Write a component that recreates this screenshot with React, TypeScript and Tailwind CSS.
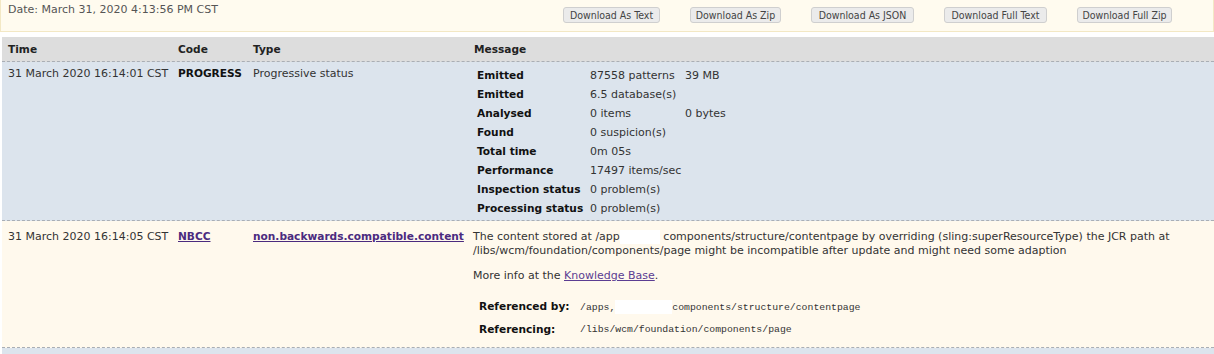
const font = "font-['DejaVu_Sans','Noto_Sans',sans-serif]";

const downloads = [
  { label: "Download As Text", w: "w-[97px]" },
  { label: "Download As Zip", w: "w-[91px]" },
  { label: "Download As JSON", w: "w-[103px]" },
  { label: "Download Full Text", w: "w-[103px]" },
  { label: "Download Full Zip", w: "w-[95px]" },
];

const stats = [
  ["Emitted", "87558 patterns", "39 MB"],
  ["Emitted", "6.5 database(s)", ""],
  ["Analysed", "0 items", "0 bytes"],
  ["Found", "0 suspicion(s)", ""],
  ["Total time", "0m 05s", ""],
  ["Performance", "17497 items/sec", ""],
  ["Inspection status", "0 problem(s)", ""],
  ["Processing status", "0 problem(s)", ""],
];

function Redacted({ w }: { w: string }) {
  return <span className={`inline-block h-[14px] align-middle bg-white ${w}`} />;
}

export default function App() {
  return (
    <div className={`${font} text-[11px] leading-[13px] text-[#333] bg-white w-[1214px] h-[354px] overflow-hidden`}>
      <div className="h-[32px] bg-[#fffbef] border border-t-0 border-[#f3e8c4] flex">
        <div className="pl-[7px] pt-[3px] w-[562px] text-[#555]">Date: March 31, 2020 4:13:56 PM CST</div>
        <div className="flex gap-[30px] pt-[7px]">
          {downloads.map((d) => (
            <button
              key={d.label}
              className={`${d.w} h-[16px] text-center text-[10.5px] leading-[14px] whitespace-nowrap font-['DejaVu_Sans_Condensed',sans-serif] text-[#444] bg-[#ebebeb] border border-[#cfcfcf] rounded-[3px]`}
            >
              {d.label}
            </button>
          ))}
        </div>
      </div>

      <div className="mt-[5px] pl-[2px]">
        <div className="grid grid-cols-[170px_75px_221px_1fr] bg-[#dddddd] h-[25px] items-center font-bold text-[10.6px] text-[#222] border-b border-dashed border-[#a9aeb5]">
          <div className="pl-[6px]">Time</div>
          <div className="pl-[6px]">Code</div>
          <div className="pl-[6px]">Type</div>
          <div className="pl-[6px]">Message</div>
        </div>

        <div className="grid grid-cols-[170px_75px_221px_1fr] bg-[#dce4ed] h-[159px] border-b border-dashed border-[#a9aeb5]">
          <div className="pl-[6px] pt-[5px] whitespace-nowrap">31 March 2020 16:14:01 CST</div>
          <div className="pl-[6px] pt-[5px] font-bold text-[10.6px] text-[#111]">PROGRESS</div>
          <div className="pl-[6px] pt-[5px]">Progressive status</div>
          <div className="pl-[9px] pt-[4px]">
            <div className="grid grid-cols-[113px_95px_auto] auto-rows-[19px] items-center w-max">
              {stats.map(([label, value, extra], i) => (
                <div key={i} className="contents">
                  <div className="font-bold text-[10.6px] text-[#111] whitespace-nowrap">{label}</div>
                  <div className="whitespace-nowrap">{value}</div>
                  <div>{extra}</div>
                </div>
              ))}
            </div>
          </div>
        </div>

        <div className="grid grid-cols-[170px_75px_221px_1fr] bg-[#fff9ed] h-[127px] border-b border-dashed border-[#a9aeb5]">
          <div className="pl-[6px] pt-[9px] whitespace-nowrap">31 March 2020 16:14:05 CST</div>
          <div className="pl-[6px] pt-[9px]">
            <a href="#" className="font-bold text-[10.6px] underline text-[#4b2b7f]">NBCC</a>
          </div>
          <div className="pl-[6px] pt-[9px] whitespace-nowrap">
            <a href="#" className="font-bold text-[10.6px] underline text-[#4b2b7f]">non.backwards.compatible.content</a>
          </div>
          <div className="pl-[5px] pt-[9px]">
            <p className="whitespace-nowrap">
              The content stored at /app<Redacted w="w-[40px]" /> components/structure/contentpage by overriding (sling:superResourceType) the JCR path at
              <br />
              /libs/wcm/foundation/components/page might be incompatible after update and might need some adaption
            </p>
            <p className="mt-[12px]">
              More info at the <a href="#" className="underline text-[#5b3d92]">Knowledge Base</a>.
            </p>
            <div className="mt-[13px] ml-[6px] grid grid-cols-[101px_auto] auto-rows-[23px] items-center w-max">
              <div className="font-bold text-[10.6px] text-[#111]">Referenced by:</div>
              <div className="font-['Liberation_Mono',monospace] text-[9.8px] text-[#333] whitespace-nowrap">
                /apps,<Redacted w="w-[57px]" />components/structure/contentpage
              </div>
              <div className="font-bold text-[10.6px] text-[#111]">Referencing:</div>
              <div className="font-['Liberation_Mono',monospace] text-[9.8px] text-[#333]">/libs/wcm/foundation/components/page</div>
            </div>
          </div>
        </div>

        <div className="bg-[#dce4ed] h-[20px]" />
      </div>
    </div>
  );
}
